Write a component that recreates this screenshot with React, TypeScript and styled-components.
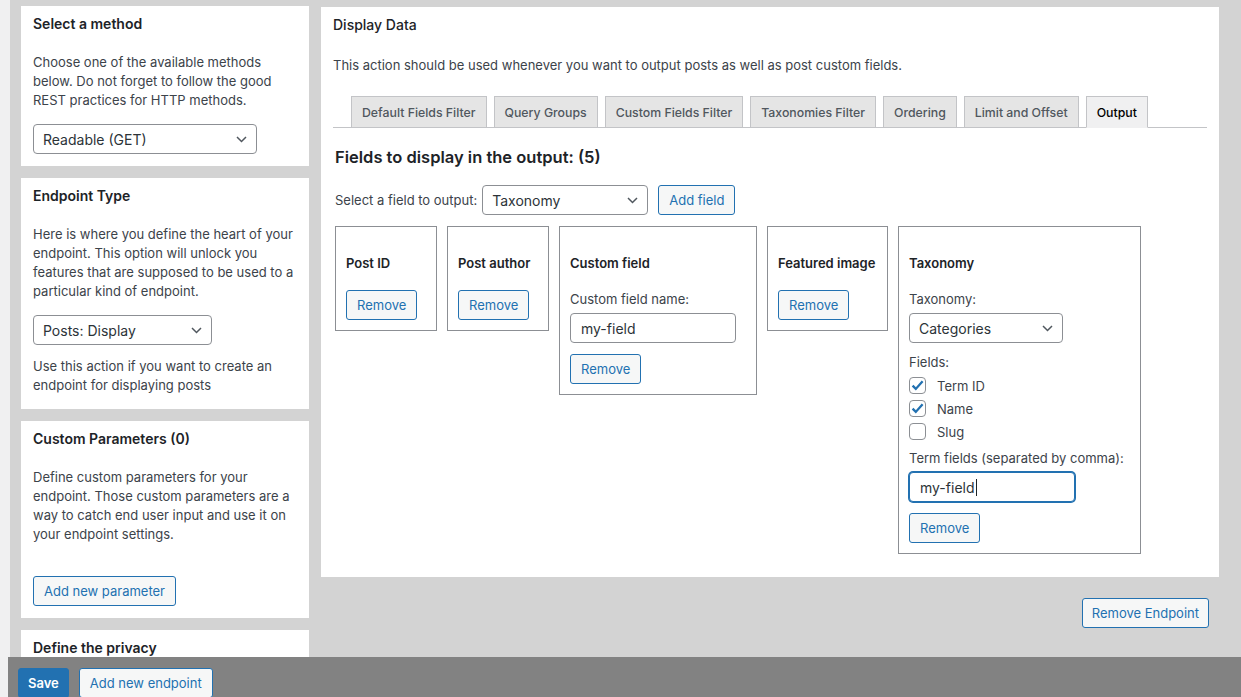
import React from "react";
import styled, { createGlobalStyle, css } from "styled-components";

const Global = createGlobalStyle`
  html, body { margin: 0; padding: 0; }
  body {
    background: #f0f0f1;
    font-family: Inter, Roboto, "Liberation Sans", Arial, sans-serif;
    font-size: 13px;
    color: #3c434a;
    -webkit-font-smoothing: antialiased;
  }
  * { box-sizing: border-box; }
`;

const Shell = styled.div`
  display: flex;
  height: 697px;
  overflow: hidden;
  padding-left: 10px;
`;

const Content = styled.div`
  flex: 1;
  background: #d3d3d3;
  padding: 6px 22px 0 11px;
  display: grid;
  grid-template-columns: 288px 898px;
  column-gap: 12px;
  align-items: start;
`;

const Sidebar = styled.div`
  display: flex;
  flex-direction: column;
  gap: 12px;
`;

const Card = styled.section<{ $minH?: number }>`
  background: #fff;
  padding: 9px 12px 12px;
  min-height: ${(p) => (p.$minH ? `${p.$minH}px` : "auto")};
`;

const CardTitle = styled.h3`
  margin: 0 0 20px;
  font-size: 14px;
  line-height: 18px;
  font-weight: 600;
  color: #1d2327;
`;

const Text = styled.p<{ $mt?: number }>`
  margin: ${(p) => p.$mt ?? 0}px 0 0;
  font-size: 13px;
  line-height: 19px;
  color: #3c434a;
`;

const SelectBox = styled.div<{ $w: number; $mt?: number }>`
  position: relative;
  width: ${(p) => p.$w}px;
  height: 30px;
  margin-top: ${(p) => p.$mt ?? 0}px;
  border: 1px solid #8c8f94;
  border-radius: 4px;
  background: #fff;
  display: flex;
  align-items: center;
  padding: 0 24px 0 9px;
  font-size: 14px;
  color: #2c3338;
  flex-shrink: 0;
`;

const Chevron = styled.svg`
  position: absolute;
  right: 9px;
  top: 50%;
  margin-top: -3px;
`;

const Select: React.FC<{ w: number; mt?: number; children: React.ReactNode }> = ({ w, mt, children }) => (
  <SelectBox $w={w} $mt={mt}>
    {children}
    <Chevron width="11" height="7" viewBox="0 0 11 7">
      <path d="M1 1l4.5 4.5L10 1" fill="none" stroke="#50575e" strokeWidth="1.5" />
    </Chevron>
  </SelectBox>
);

const Button = styled.button<{ $primary?: boolean; $mt?: number }>`
  height: 30px;
  padding: 0 10px;
  margin-top: ${(p) => p.$mt ?? 0}px;
  border-radius: 3px;
  font-family: inherit;
  font-size: 13px;
  line-height: 28px;
  cursor: pointer;
  white-space: nowrap;
  flex-shrink: 0;
  ${(p) =>
    p.$primary
      ? css`
          padding: 0 9px;
          background: #2271b1;
          border: 1px solid #2271b1;
          color: #fff;
          font-weight: 600;
        `
      : css`
          background: #f6f7f7;
          border: 1px solid #2271b1;
          color: #2271b1;
        `}
`;

const MainColumn = styled.div`
  display: flex;
  flex-direction: column;
`;

const Panel = styled.section`
  margin-top: 1px;
  background: #fff;
  padding: 9px 12px 23px;
`;

const PanelTitle = styled.h2`
  margin: 0;
  font-size: 14px;
  line-height: 18px;
  font-weight: 500;
  color: #1d2327;
`;

const TabBar = styled.nav`
  margin-top: 21px;
  display: flex;
  gap: 7px;
  padding-left: 18px;
  border-bottom: 1px solid #c3c4c7;
`;

const Tab = styled.div<{ $active?: boolean }>`
  height: 32px;
  margin-bottom: -1px;
  padding: 0 10px;
  display: flex;
  align-items: center;
  border: 1px solid #c3c4c7;
  font-size: 12.3px;
  font-weight: 500;
  background: ${(p) => (p.$active ? "#f0f0f1" : "#e5e5e5")};
  color: ${(p) => (p.$active ? "#000" : "#50575e")};
  border-bottom-color: ${(p) => (p.$active ? "#f0f0f1" : "#c3c4c7")};
`;

const OutputBody = styled.div`
  padding: 0 2px;
`;

const SectionTitle = styled.h3`
  margin: 19px 0 0;
  font-size: 16.5px;
  line-height: 20px;
  font-weight: 600;
  color: #1d2327;
`;

const AddRow = styled.div`
  margin-top: 18px;
  display: flex;
  align-items: center;
  gap: 10px;
`;

const AddLabel = styled.span`
  font-size: 13px;
  color: #3c434a;
  margin-right: -5px;
`;

const FieldList = styled.div`
  margin-top: 11px;
  display: flex;
  align-items: flex-start;
  gap: 10px;
`;

const FieldCard = styled.div<{ $w: number }>`
  width: ${(p) => p.$w}px;
  border: 1px solid #8c8f94;
  padding: 27px 10px 10px 10px;
  display: flex;
  flex-direction: column;
  align-items: flex-start;
`;

const FieldTitle = styled.h4`
  margin: 0 0 18px;
  font-size: 13px;
  line-height: 18px;
  font-weight: 600;
  color: #1d2327;
  white-space: nowrap;
`;

const FieldLabel = styled.div<{ $mt?: number }>`
  margin-top: ${(p) => p.$mt ?? 0}px;
  font-size: 13px;
  line-height: 18px;
  color: #3c434a;
  white-space: nowrap;
`;

const TextBox = styled.div<{ $w: number; $focus?: boolean }>`
  width: ${(p) => p.$w}px;
  height: 30px;
  margin: 5px 0 11px;
  border-radius: 4px;
  display: flex;
  align-items: center;
  padding: 0 10px;
  font-size: 14px;
  color: #2c3338;
  background: #fff;
  border: 1px solid ${(p) => (p.$focus ? "#2271b1" : "#8c8f94")};
  box-shadow: ${(p) => (p.$focus ? "0 0 0 1px #2271b1" : "none")};
`;

const Caret = styled.span`
  display: inline-block;
  width: 1px;
  height: 17px;
  background: #1d2327;
  margin-left: 1px;
`;

const CheckList = styled.div`
  margin-top: 3px;
  display: flex;
  flex-direction: column;
`;

const CheckRow = styled.div`
  display: flex;
  align-items: center;
  gap: 11px;
  height: 23px;
  font-size: 13px;
  line-height: 18px;
  color: #3c434a;
`;

const Box = styled.span`
  width: 17px;
  height: 17px;
  border: 1px solid #8c8f94;
  border-radius: 4px;
  background: #fff;
  display: flex;
  align-items: center;
  justify-content: center;
`;

const Check: React.FC<{ checked?: boolean; children: React.ReactNode }> = ({ checked, children }) => (
  <CheckRow>
    <Box>
      {checked && (
        <svg width="15" height="15" viewBox="0 0 15 15">
          <path d="M2.6 7.6l3.2 3.3L12.6 3.2" fill="none" stroke="#2271b1" strokeWidth="2.3" strokeLinejoin="miter" />
        </svg>
      )}
    </Box>
    {children}
  </CheckRow>
);

const RemoveEndpoint = styled(Button)`
  align-self: flex-end;
  margin: 21px 10px 0 0;
  padding: 0 9px;
`;

const Footer = styled.footer`
  position: fixed;
  left: 8px;
  right: 0;
  bottom: 0;
  height: 40px;
  background: #828282;
  display: flex;
  align-items: flex-start;
  gap: 10px;
  padding: 11px 0 0 10px;
`;

export default function App() {
  return (
    <>
      <Global />
      <Shell>
        <Content>
          <Sidebar>
            <Card>
              <CardTitle>Select a method</CardTitle>
              <Text>
                Choose one of the available methods
                <br />
                below. Do not forget to follow the good
                <br />
                REST practices for HTTP methods.
              </Text>
              <Select w={224} mt={14}>
                Readable (GET)
              </Select>
            </Card>
            <Card>
              <CardTitle>Endpoint Type</CardTitle>
              <Text>
                Here is where you define the heart of your
                <br />
                endpoint. This option will unlock you
                <br />
                features that are supposed to be used to a
                <br />
                particular kind of endpoint.
              </Text>
              <Select w={179} mt={14}>
                Posts: Display
              </Select>
              <Text $mt={12}>
                Use this action if you want to create an
                <br />
                endpoint for displaying posts
              </Text>
              <div style={{ height: 2 }} />
            </Card>
            <Card>
              <CardTitle>Custom Parameters (0)</CardTitle>
              <Text>
                Define custom parameters for your
                <br />
                endpoint. Those custom parameters are a
                <br />
                way to catch end user input and use it on
                <br />
                your endpoint settings.
              </Text>
              <Button $mt={32}>Add new parameter</Button>
            </Card>
            <Card $minH={120}>
              <CardTitle>Define the privacy</CardTitle>
            </Card>
          </Sidebar>
          <MainColumn>
            <Panel>
              <PanelTitle>Display Data</PanelTitle>
              <Text $mt={22}>
                This action should be used whenever you want to output posts as well as post custom fields.
              </Text>
              <TabBar>
                <Tab>Default Fields Filter</Tab>
                <Tab>Query Groups</Tab>
                <Tab>Custom Fields Filter</Tab>
                <Tab>Taxonomies Filter</Tab>
                <Tab>Ordering</Tab>
                <Tab>Limit and Offset</Tab>
                <Tab $active>Output</Tab>
              </TabBar>
              <OutputBody>
                <SectionTitle>Fields to display in the output: (5)</SectionTitle>
                <AddRow>
                  <AddLabel>Select a field to output:</AddLabel>
                  <Select w={166}>Taxonomy</Select>
                  <Button>Add field</Button>
                </AddRow>
                <FieldList>
                  <FieldCard $w={102}>
                    <FieldTitle>Post ID</FieldTitle>
                    <Button>Remove</Button>
                  </FieldCard>
                  <FieldCard $w={102}>
                    <FieldTitle>Post author</FieldTitle>
                    <Button>Remove</Button>
                  </FieldCard>
                  <FieldCard $w={198}>
                    <FieldTitle>Custom field</FieldTitle>
                    <FieldLabel>Custom field name:</FieldLabel>
                    <TextBox $w={166}>my-field</TextBox>
                    <Button>Remove</Button>
                  </FieldCard>
                  <FieldCard $w={121}>
                    <FieldTitle>Featured image</FieldTitle>
                    <Button>Remove</Button>
                  </FieldCard>
                  <FieldCard $w={243}>
                    <FieldTitle>Taxonomy</FieldTitle>
                    <FieldLabel>Taxonomy:</FieldLabel>
                    <Select w={154} mt={5}>
                      Categories
                    </Select>
                    <FieldLabel $mt={10}>Fields:</FieldLabel>
                    <CheckList>
                      <Check checked>Term ID</Check>
                      <Check checked>Name</Check>
                      <Check>Slug</Check>
                    </CheckList>
                    <FieldLabel $mt={6}>Term fields (separated by comma):</FieldLabel>
                    <TextBox $w={166} $focus>
                      my-field
                      <Caret />
                    </TextBox>
                    <Button>Remove</Button>
                  </FieldCard>
                </FieldList>
              </OutputBody>
            </Panel>
            <RemoveEndpoint>Remove Endpoint</RemoveEndpoint>
          </MainColumn>
        </Content>
      </Shell>
      <Footer>
        <Button $primary>Save</Button>
        <Button>Add new endpoint</Button>
      </Footer>
    </>
  );
}
